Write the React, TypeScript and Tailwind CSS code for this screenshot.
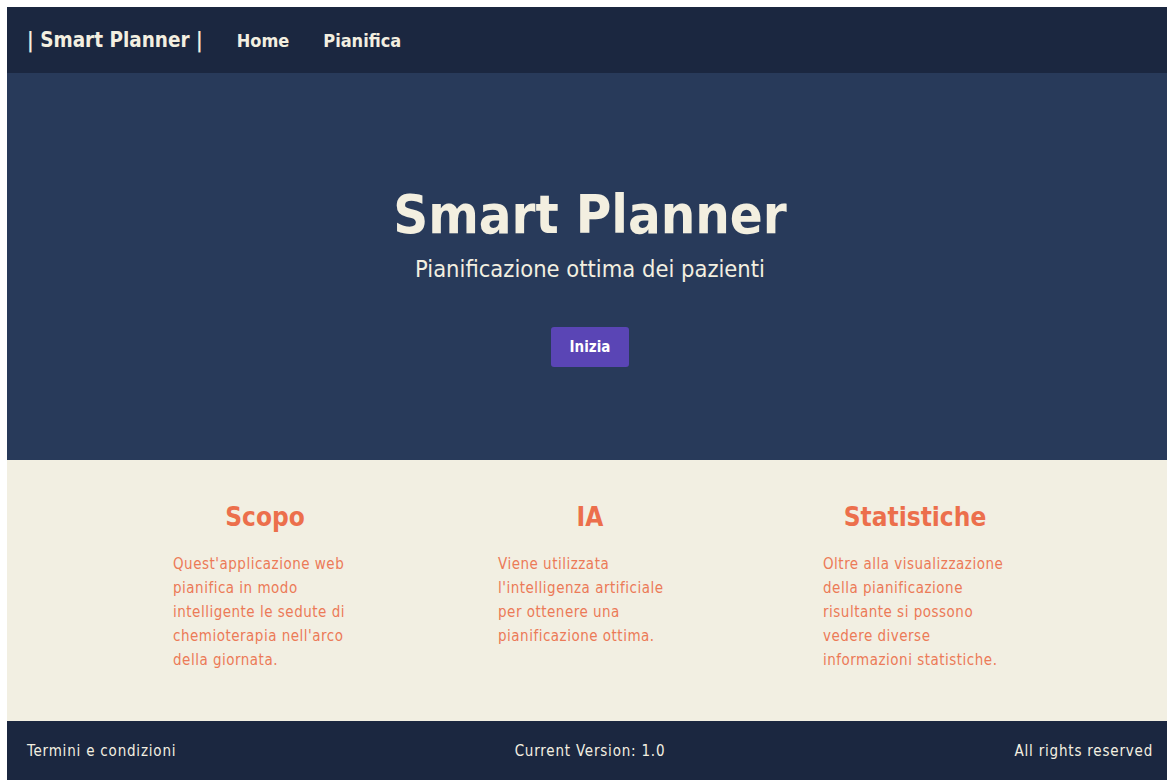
const features = [
  {
    title: "Scopo",
    text: "Quest'applicazione web pianifica in modo intelligente le sedute di chemioterapia nell'arco della giornata.",
  },
  {
    title: "IA",
    text: "Viene utilizzata l'intelligenza artificiale per ottenere una pianificazione ottima.",
  },
  {
    title: "Statistiche",
    text: "Oltre alla visualizzazione della pianificazione risultante si possono vedere diverse informazioni statistiche.",
  },
];

export default function App() {
  return (
    <div
      className="min-h-[780px] overflow-hidden bg-white pl-[7px] pt-[7px]"
      style={{ fontFamily: '"DejaVu Sans Condensed", "DejaVu Sans", sans-serif' }}
    >
      <div className="w-[1166px]">
        {/* Top navigation */}
        <nav className="flex h-[66px] items-center bg-[#1b2740] pl-5">
          <span className="text-[20.5px] font-bold text-[#f3efe0]">| Smart Planner |</span>
          <a href="#" className="ml-[34px] text-[18px] font-bold text-[#f3efe0]">
            Home
          </a>
          <a href="#" className="ml-[34px] text-[18px] font-bold text-[#f3efe0]">
            Pianifica
          </a>
        </nav>

        {/* Hero */}
        <section className="flex h-[387px] flex-col items-center bg-[#283a5a] pt-[110px]">
          <h1 className="text-[54px] font-bold leading-[64px] text-[#f3efe0]">Smart Planner</h1>
          <p className="mt-[5px] text-[23.5px] text-[#f3efe0]">Pianificazione ottima dei pazienti</p>
          <button className="mt-[40px] h-[40px] w-[78px] rounded-[3px] bg-[#5a45b5] text-[15px] font-bold text-white">
            Inizia
          </button>
        </section>

        {/* Feature columns */}
        <section className="flex h-[261px] justify-center bg-[#f2efe2] pt-[41px]">
          {features.map((f) => (
            <div key={f.title} className="flex w-[325px] flex-col items-center">
              <h2 className="text-[26px] font-bold leading-[32px] text-[#ec6f4c]">{f.title}</h2>
              <p className="mt-[19px] w-[184px] text-[15px] leading-[24px] tracking-[0.5px] text-[#ec7a57]">
                {f.text}
              </p>
            </div>
          ))}
        </section>

        {/* Footer */}
        <footer className="grid h-[60px] grid-cols-3 items-center bg-[#1b2740] px-[20px] text-[15px] tracking-[0.8px] text-[#f3efe0]">
          <span>Termini e condizioni</span>
          <span className="text-center">Current Version: 1.0</span>
          <span className="text-right">All rights reserved</span>
        </footer>
      </div>
    </div>
  );
}
